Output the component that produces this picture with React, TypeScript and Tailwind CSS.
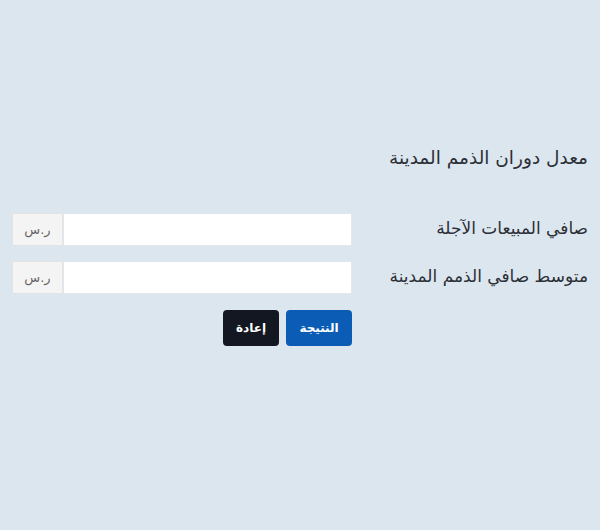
import React, { useState } from 'react';

const Row = ({ label, value, onChange }: { label: string; value: string; onChange: (v: string) => void }) => (
  <div className="flex items-center">
    <label className="w-[236px] shrink-0 text-[17px] leading-[28px] -mt-[3px] text-[#2b2f36]">{label}</label>
    <div className="flex flex-1 h-[33px]">
      <input
        value={value}
        onChange={(e) => onChange(e.target.value)}
        className="flex-1 min-w-0 bg-white border border-[#e3e7ec] outline-none px-3 text-[15px]"
      />
      <span className="w-[51px] flex items-center justify-center bg-[#f4f4f4] border border-[#e3e3e3] text-[13px] text-[#666]">
        ر.س
      </span>
    </div>
  </div>
);

export default function App() {
  const [sales, setSales] = useState('');
  const [avg, setAvg] = useState('');

  return (
    <div
      dir="rtl"
      className="w-full min-h-[530px] bg-[#dce6ef] px-[12px] pt-[143px]"
      style={{ fontFamily: '"DejaVu Sans", sans-serif' }}
    >
      <h2 className="text-[18.5px] leading-[30px] text-[#2b2f36] mb-[40px]">معدل دوران الذمم المدينة</h2>
      <div className="flex flex-col gap-[15px]">
        <Row label="صافي المبيعات الآجلة" value={sales} onChange={setSales} />
        <Row label="متوسط صافي الذمم المدينة" value={avg} onChange={setAvg} />
      </div>
      <div className="flex gap-[7px] mt-[16px] mr-[236px]">
        <button className="w-[66px] h-[36px] rounded-[4px] bg-[#0b5cb5] text-white text-[12px] font-bold">النتيجة</button>
        <button
          onClick={() => { setSales(''); setAvg(''); }}
          className="w-[56px] h-[36px] rounded-[4px] bg-[#131722] text-white text-[12px] font-bold"
        >
          إعادة
        </button>
      </div>
    </div>
  );
}
